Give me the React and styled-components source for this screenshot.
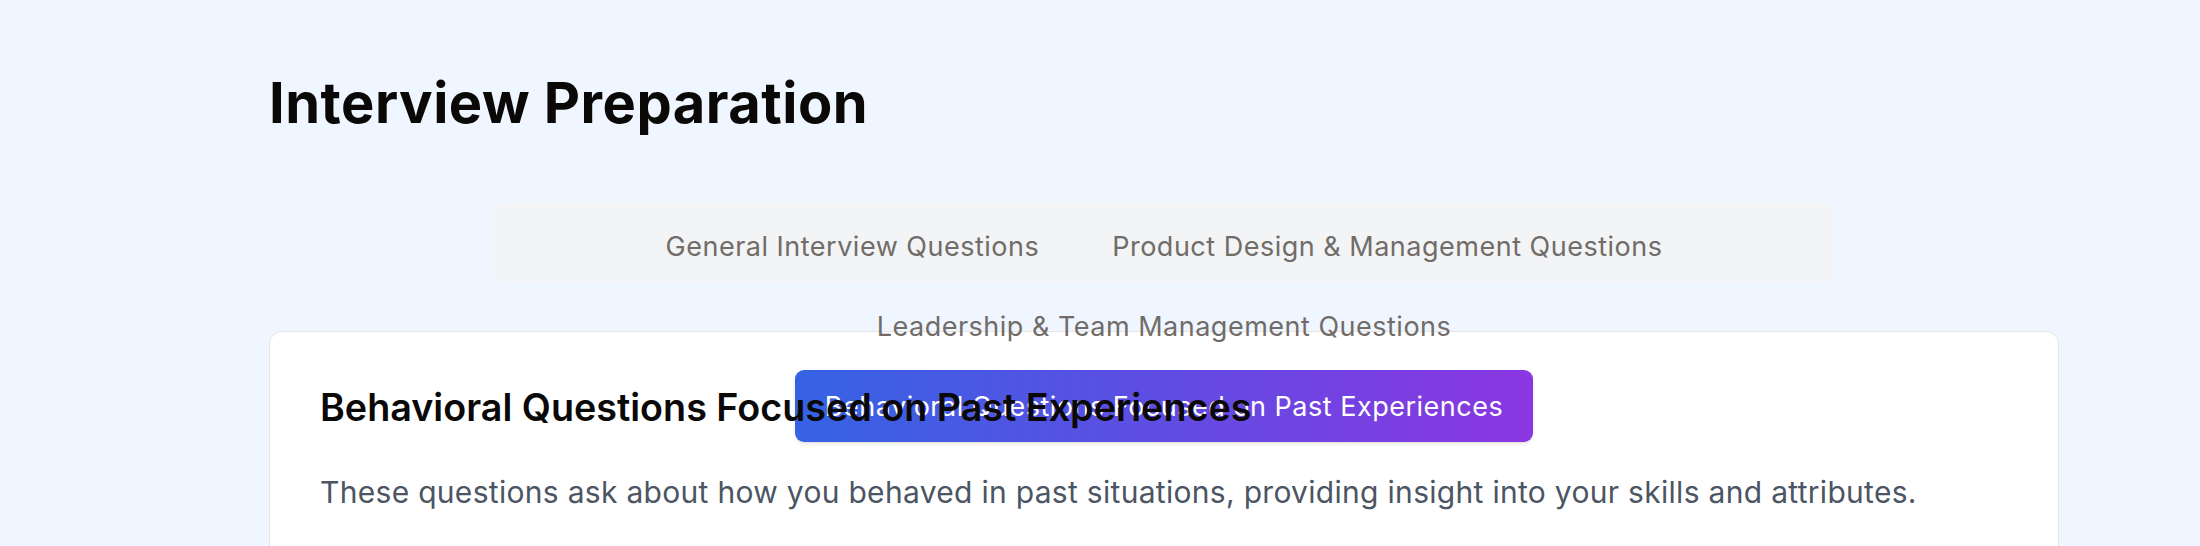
import React, { useState } from "react";
import styled, { createGlobalStyle } from "styled-components";

const Global = createGlobalStyle`
  html, body {
    margin: 0;
    padding: 0;
    background: #eff6ff;
    font-family: Inter, "Noto Sans", "Liberation Sans", sans-serif;
    -webkit-font-smoothing: antialiased;
  }
  * { box-sizing: border-box; }
`;

const Page = styled.div`
  min-height: 546px;
  padding: 73px 141px 0 269px;
  background: #eff6ff;
`;

const Title = styled.h1`
  margin: 0 0 69px 0;
  font-size: 56px;
  line-height: 60px;
  font-weight: 700;
  color: #0a0908;
  letter-spacing: 0.5px;
`;

const TabBar = styled.div`
  width: 75%;
  height: 80px;
  margin: 0 auto 49px auto;
  padding: 8px;
  background: #f3f4f6;
  border-radius: 12px;
  display: flex;
  flex-wrap: wrap;
  justify-content: center;
  align-content: flex-start;
  row-gap: 8px;
  column-gap: 13px;
`;

const Tab = styled.button`
  height: 72px;
  padding: 0 30px;
  border: none;
  border-radius: 9px;
  font-family: inherit;
  font-size: 27px;
  font-weight: 400;
  letter-spacing: 0.5px;
  white-space: nowrap;
  cursor: pointer;
  color: ${(p) => (p.$active ? "#ffffff" : "#716c68")};
  background: ${(p) =>
    p.$active ? "linear-gradient(to right, #3563e3, #8b36e1)" : "transparent"};
  box-shadow: ${(p) =>
    p.$active ? "0 2px 4px rgba(0,0,0,0.08), 0 1px 2px rgba(0,0,0,0.06)" : "none"};
`;

const Card = styled.div`
  background: #ffffff;
  border: 1.5px solid #e7e5e4;
  border-radius: 13px;
  padding: 51px 50px 120px 50px;
`;

const CardTitle = styled.h2`
  margin: 0 0 40px 0;
  font-size: 37.7px;
  line-height: 48px;
  font-weight: 600;
  color: #0a0908;
`;

const CardText = styled.p`
  margin: 0;
  font-size: 30px;
  line-height: 42px;
  font-weight: 400;
  letter-spacing: 0.3px;
  color: #4b5563;
`;

const tabs = [
  "General Interview Questions",
  "Product Design & Management Questions",
  "Leadership & Team Management Questions",
  "Behavioral Questions Focused on Past Experiences",
];

export default function App() {
  const [active, setActive] = useState(3);
  return (
    <>
      <Global />
      <Page>
        <Title>Interview Preparation</Title>
        <TabBar>
          {tabs.map((t, i) => (
            <Tab key={t} $active={i === active} onClick={() => setActive(i)}>
              {t}
            </Tab>
          ))}
        </TabBar>
        <Card>
          <CardTitle>{tabs[active]}</CardTitle>
          <CardText>
            These questions ask about how you behaved in past situations, providing insight into your skills and attributes.
          </CardText>
        </Card>
      </Page>
    </>
  );
}
